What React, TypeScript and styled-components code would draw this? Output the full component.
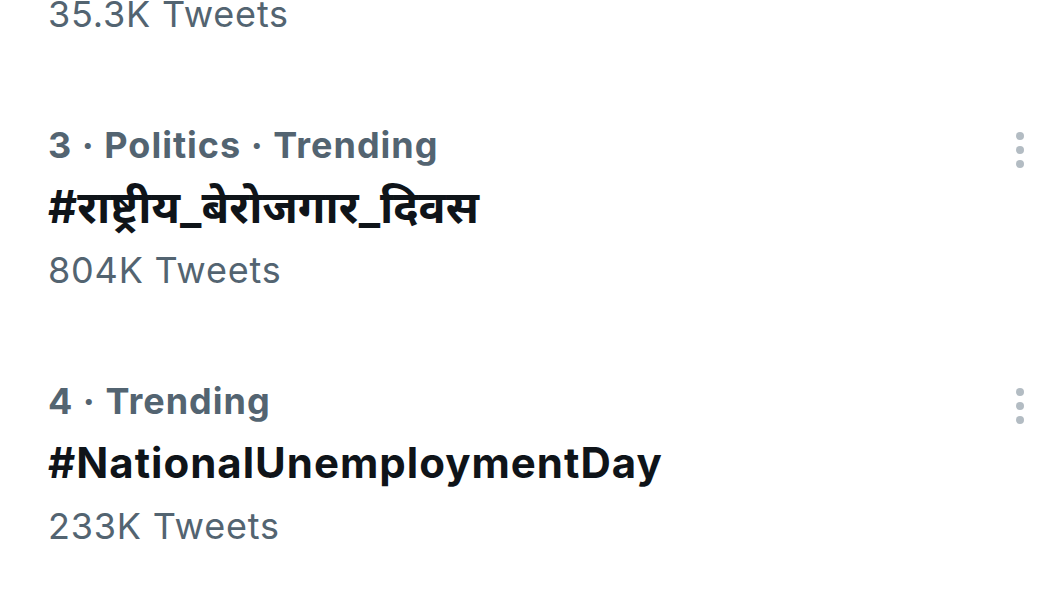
import styled, { createGlobalStyle } from 'styled-components'

type Trend = {
  rank: number
  category?: string
  name: string
  tweets: string
  devanagari?: boolean
}

const trends: Trend[] = [
  {
    rank: 3,
    category: 'Politics',
    name: '#राष्ट्रीय_बेरोजगार_दिवस',
    tweets: '804K Tweets',
    devanagari: true,
  },
  { rank: 4, name: '#NationalUnemploymentDay', tweets: '233K Tweets' },
]

const GlobalStyle = createGlobalStyle`
  html, body {
    margin: 0;
    padding: 0;
    background: #ffffff;
  }
  body {
    font-family: Inter, "Noto Sans Devanagari", "Noto Sans", sans-serif;
    -webkit-font-smoothing: antialiased;
  }
`

function MoreIcon(): JSX.Element {
  return (
    <svg width="8" height="36" viewBox="0 0 8 36" aria-hidden="true">
      <circle cx="4" cy="4" r="4" />
      <circle cx="4" cy="18" r="4" />
      <circle cx="4" cy="32" r="4" />
    </svg>
  )
}

export default function App(): JSX.Element {
  return (
    <>
      <GlobalStyle />
      <FeedLayout>
        <PrevCount>35.3K Tweets</PrevCount>
        {trends.map(({ rank, category, name, tweets, devanagari }) => (
          <TrendRow key={rank}>
            <TrendBody>
              <Meta>
                {[String(rank), category, 'Trending'].filter(Boolean).join(' · ')}
              </Meta>
              <TagName $devanagari={devanagari} lang={devanagari ? 'hi' : 'en'}>
                {name}
              </TagName>
              <Count>{tweets}</Count>
            </TrendBody>
            <MoreButton type="button" aria-label="More">
              <MoreIcon />
            </MoreButton>
          </TrendRow>
        ))}
      </FeedLayout>
    </>
  )
}

const FeedLayout = styled.div`
  width: 1040px;
  height: 595px;
  overflow: hidden;
  display: flex;
  flex-direction: column;
  padding: 0 16px 0 48px;
  box-sizing: border-box;
`

const Count = styled.p`
  margin: 0;
  height: 46px;
  font-size: 36px;
  line-height: 46px;
  letter-spacing: 0.8px;
  font-weight: 400;
  color: #536471;
  white-space: nowrap;
`

const PrevCount = styled(Count)`
  height: 28px;
  line-height: 28px;
  margin-bottom: 52px;
`

const TrendRow = styled.div`
  display: flex;
  justify-content: space-between;
  align-items: flex-start;
  padding: 43px 0;
`

const TrendBody = styled.div`
  display: flex;
  flex-direction: column;
`

const Meta = styled.p`
  margin: 0;
  height: 44px;
  font-size: 36px;
  line-height: 44px;
  letter-spacing: 1px;
  font-weight: 700;
  color: #536471;
  white-space: nowrap;
`

const TagName = styled.h2<{ $devanagari?: boolean }>`
  margin: 0;
  height: 80px;
  font-size: ${({ $devanagari }) => ($devanagari ? '45px' : '42px')};
  line-height: 80px;
  letter-spacing: ${({ $devanagari }) => ($devanagari ? '0' : '1px')};
  font-weight: 700;
  color: #0f1419;
  white-space: nowrap;
`

const MoreButton = styled.button`
  margin-top: 9px;
  padding: 0;
  border: none;
  background: none;
  display: flex;
  fill: #b3bcc3;
`
